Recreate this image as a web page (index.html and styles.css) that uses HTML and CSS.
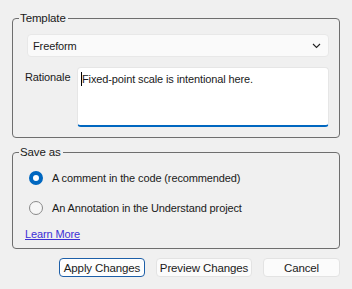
FILE: index.html
```html
<!DOCTYPE html>
<html>
<head>
<meta charset="utf-8">
<link rel="stylesheet" href="styles.css">
</head>
<body>
<div class="dialog">
  <fieldset class="group group-template">
    <legend class="legend">Template</legend>
    <div class="select">
      <span class="select-text">Freeform</span>
      <svg class="chevron" width="9" height="6" viewBox="0 0 9 6"><path d="M1 1 L4.5 4.5 L8 1" fill="none" stroke="#222" stroke-width="1.1"/></svg>
    </div>
    <div class="field-row">
      <label class="field-label">Rationale</label>
      <div class="textarea"><span class="caret"></span>Fixed-point scale is intentional here.</div>
    </div>
  </fieldset>
  <fieldset class="group group-save">
    <legend class="legend">Save as</legend>
    <div class="radio-row">
      <span class="radio radio-on"></span>
      <span class="radio-label">A comment in the code (recommended)</span>
    </div>
    <div class="radio-row">
      <span class="radio"></span>
      <span class="radio-label">An Annotation in the Understand project</span>
    </div>
    <a class="link" href="#">Learn More</a>
  </fieldset>
  <div class="buttons">
    <button class="btn btn-apply">Apply Changes</button>
    <button class="btn btn-preview">Preview Changes</button>
    <button class="btn btn-cancel">Cancel</button>
  </div>
</div>
</body>
</html>
```
FILE: styles.css
```css
html, body {
  margin: 0;
  padding: 0;
  background: #f0f0f0;
}
body {
  font-family: "Liberation Sans", Arial, sans-serif;
  font-size: 11px;
  letter-spacing: -0.12px;
  color: #1a1a1a;
  width: 352px;
  height: 289px;
  overflow: hidden;
}
.dialog {
  padding: 11px 12px 0 12px;
  display: flex;
  flex-direction: column;
}
.group {
  margin: 0;
  border: 1px solid #6e6e6e;
  border-radius: 4px;
  padding: 0 10px 10px 12px;
  min-width: 0;
}
.legend {
  margin-left: -6px;
  padding: 0 2px 0 1px;
  line-height: 14px;
  font-size: 11.5px;
}
.group-template {
  padding-top: 9px;
  display: flex;
  flex-direction: column;
  gap: 10px;
}
.select {
  margin-left: 2px;
  height: 23px;
  box-sizing: border-box;
  background: #fafafa;
  border: 1px solid #e8e8e8;
  border-radius: 4px;
  display: flex;
  align-items: center;
  justify-content: space-between;
  padding: 0 7px 0 5px;
}
.select-text {
  line-height: 14px;
}
.chevron {
  display: block;
}
.field-row {
  display: flex;
  align-items: flex-start;
}
.field-label {
  width: 52px;
  padding-top: 3px;
  line-height: 14px;
}
.textarea {
  flex: 1;
  height: 60px;
  box-sizing: border-box;
  background: #fff;
  border: 1px solid #e6e6e6;
  border-bottom: 2px solid #0067c0;
  border-radius: 4px;
  padding: 4px 3px 0 3px;
  line-height: 14px;
  display: flex;
  align-items: flex-start;
}
.caret {
  display: inline-block;
  width: 1px;
  height: 14px;
  background: #000;
}
.group-save {
  margin-top: 7px;
  padding-top: 11px;
  padding-bottom: 7px;
  display: flex;
  flex-direction: column;
}
.radio-row {
  display: flex;
  align-items: center;
  height: 16px;
  margin-left: 4px;
  margin-bottom: 14px;
  gap: 9px;
}
.radio {
  width: 14px;
  height: 14px;
  box-sizing: border-box;
  border-radius: 50%;
  border: 1px solid #8a8a8a;
  background: #f6f6f6;
  flex: none;
}
.radio-on {
  border: 4px solid #0067c0;
  background: #fff;
}
.radio-label {
  line-height: 14px;
}
.link {
  margin-top: -3px;
  color: #3c2fd6;
  text-decoration: underline;
  line-height: 14px;
  align-self: flex-start;
}
.buttons {
  margin-top: 9px;
  display: flex;
  justify-content: flex-end;
  gap: 11px;
}
.btn {
  font-family: "Liberation Sans", Arial, sans-serif;
  font-size: 11.5px;
  letter-spacing: -0.12px;
  color: #1a1a1a;
  height: 19px;
  box-sizing: border-box;
  background: #fbfbfb;
  border: 1px solid #e3e3e3;
  border-radius: 4px;
  padding: 0;
  line-height: 16px;
  white-space: nowrap;
}
.btn-apply {
  width: 86px;
  border: 1px solid #1d5fa8;
  box-shadow: inset 0 0 0 1px #ffffff;
  background: #fdfdfd;
}
.btn-preview {
  width: 96px;
}
.btn-cancel {
  width: 77px;
}
```
